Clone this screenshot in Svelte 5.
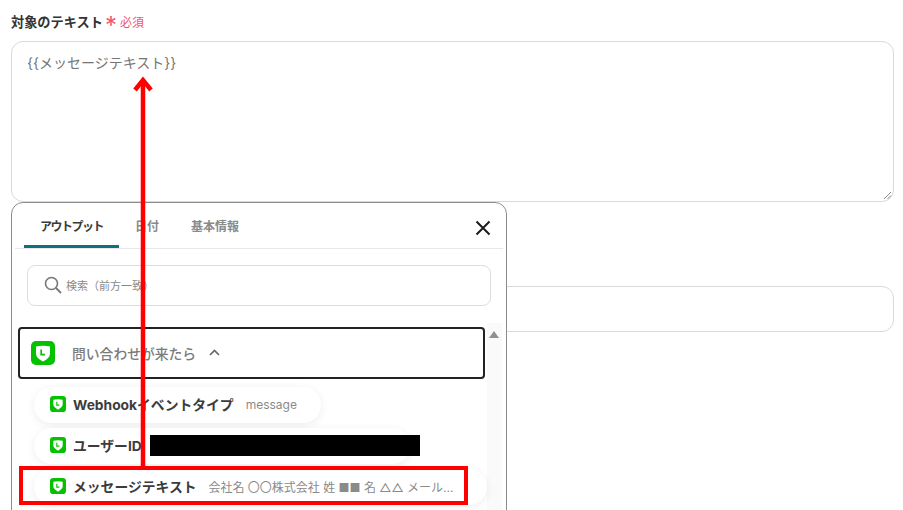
<script>
  let tabs = [
    { label: 'アウトプット', active: true },
    { label: '日付', active: false },
    { label: '基本情報', active: false }
  ];
</script>

{#snippet lineIcon(size)}
  <svg class="line-icon" width={size} height={size} viewBox="0 0 24 24">
    <rect width="24" height="24" rx="5" fill="#06c100" />
    <path d="M5 5.5 Q12 4 19 5.5 V12.5 Q19 17 12 20.5 Q5 17 5 12.5 Z" fill="#fff" />
    <path d="M10.2 8.5 V13.6 H14" fill="none" stroke="#06c100" stroke-width="1.7" />
  </svg>
{/snippet}

<div class="page">
  <div class="label">
    <span>対象のテキスト</span><span class="star">*</span><span class="req">必須</span>
  </div>
  <div class="textarea">
    {'{{'}メッセージテキスト{'}}'}
    <svg class="grip" width="9" height="9" viewBox="0 0 9 9">
      <path d="M1 8 L8 1 M4.5 8 L8 4.5" stroke="#8a8a8a" stroke-width="1" />
    </svg>
  </div>
  <div class="field"></div>

  <div class="popup">
    <div class="tabs">
      {#each tabs as tab}
        <div class="tab" class:active={tab.active}>{tab.label}</div>
      {/each}
      <svg class="close" width="16" height="16" viewBox="0 0 16 16">
        <path d="M1.5 1.5 L14.5 14.5 M14.5 1.5 L1.5 14.5" stroke="#1c1c1c" stroke-width="2" />
      </svg>
    </div>
    <div class="search">
      <svg width="18" height="18" viewBox="0 0 18 18">
        <circle cx="7.5" cy="7.5" r="6" fill="none" stroke="#777" stroke-width="1.6" />
        <path d="M12 12 L17 17" stroke="#777" stroke-width="1.8" />
      </svg>
      <span>検索（前方一致）</span>
    </div>
    <div class="list">
      <div class="rows">
        <div class="group">
          {@render lineIcon(24)}
          <span class="group-name">問い合わせが来たら</span>
          <svg width="11" height="7" viewBox="0 0 11 7">
            <path d="M1 6 L5.5 1.5 L10 6" fill="none" stroke="#666" stroke-width="1.7" />
          </svg>
        </div>
        <div class="pill">
          {@render lineIcon(16)}
          <span class="name">Webhookイベントタイプ</span>
          <span class="value">message</span>
        </div>
        <div class="pill user">
          {@render lineIcon(16)}
          <span class="name">ユーザーID</span>
          <span class="mask"></span>
        </div>
        <div class="pill wide">
          {@render lineIcon(16)}
          <span class="name">メッセージテキスト</span>
          <span class="value">会社名 〇〇株式会社 姓 ■■ 名 △△ メール...</span>
        </div>
      </div>
      <div class="scrollbar"><span class="up"></span></div>
    </div>
  </div>

  <!-- annotations on top of the screenshot -->
  <div class="red-box"></div>
  <svg class="arrow" width="24" height="392" viewBox="0 0 24 392">
    <path d="M12 392 V7" stroke="#f00" stroke-width="4.5" fill="none" />
    <path d="M4 16 L12 6 L20 16" stroke="#f00" stroke-width="4.5" fill="none" />
  </svg>
</div>

<style>
  :global(body) {
    margin: 0;
    background: #fff;
  }

  .page {
    position: relative;
    width: 903px;
    height: 510px;
    overflow: hidden;
    padding: 12px 9px 0 11px;
    box-sizing: border-box;
    font-family: Inter, "Noto Sans CJK JP", sans-serif;
  }

  .label {
    display: flex;
    align-items: center;
    height: 19px;
    font-size: 13.2px;
    font-weight: 700;
    color: #333;
    margin-bottom: 10px;
  }

  .star {
    color: #f4566c;
    font-size: 24px;
    font-weight: 400;
    margin-left: 2px;
    line-height: 19px;
    padding-top: 8px;
  }

  .req {
    color: #f4566c;
    font-size: 12px;
    font-weight: 400;
    margin-left: 3px;
  }

  .textarea {
    position: relative;
    height: 161px;
    box-sizing: border-box;
    border: 1px solid #d9d9dd;
    border-radius: 12px;
    padding: 11px 15px;
    font-size: 14px;
    line-height: 20px;
    color: #757575;
  }

  .grip {
    position: absolute;
    right: 1px;
    bottom: 1px;
  }

  .field {
    height: 46px;
    margin-top: 84px;
    box-sizing: border-box;
    border: 1px solid #d9d9dd;
    border-radius: 12px;
  }

  .popup {
    position: absolute;
    left: 11px;
    top: 202px;
    width: 496px;
    height: 340px;
    box-sizing: border-box;
    background: #fff;
    border: 1px solid #8c8c8c;
    border-radius: 12px;
    padding: 0 3px 0 3px;
  }

  .tabs {
    position: relative;
    display: flex;
    height: 45px;
    border-bottom: 1px solid #e8e8e8;
    padding-left: 9px;
  }

  .tab {
    box-sizing: border-box;
    height: 45px;
    padding-top: 16px;
    font-size: 12px;
    line-height: 16px;
    font-weight: 700;
    color: #8a8a8a;
    margin-right: 32px;
  }

  .tab.active {
    width: 95px;
    margin-right: 16px;
    padding-left: 16px;
    color: #3a3a3a;
    letter-spacing: -1.5px;
    border-bottom: 3px solid #136f80;
    border-radius: 3px 3px 0 0;
  }

  .close {
    position: absolute;
    right: 12px;
    top: 17px;
  }

  .search {
    display: flex;
    align-items: center;
    gap: 4px;
    height: 41px;
    box-sizing: border-box;
    margin: 16px 12px 0 12px;
    padding: 0 0 1px 16px;
    border: 1px solid #ddd;
    border-radius: 8px;
    font-size: 11px;
    color: #8a8a8a;
  }

  .list {
    display: flex;
    margin-top: 21px;
    padding-left: 3px;
  }

  .rows {
    width: 467px;
    flex: none;
  }

  .group {
    display: flex;
    align-items: center;
    box-sizing: border-box;
    height: 52px;
    padding: 0 0 1px 11px;
    border: 2px solid #222;
    border-radius: 4px;
    font-size: 13.8px;
    font-weight: 500;
    color: #7b7b7b;
    margin-bottom: 8px;
  }

  .group-name {
    margin-left: 17px;
    margin-right: 13px;
  }

  .pill {
    position: relative;
    display: flex;
    align-items: center;
    box-sizing: border-box;
    width: 287px;
    height: 36px;
    margin: 0 0 5px 16px;
    padding: 0 0 2px 16px;
    border-radius: 18px;
    background: #fff;
    box-shadow: 0 2px 10px rgba(0, 0, 0, 0.07);
  }

  .pill.user {
    width: 376px;
  }

  .pill.wide {
    width: 453px;
  }

  .name {
    margin-left: 7px;
    font-size: 13.8px;
    font-weight: 700;
    color: #3c3c3c;
    white-space: nowrap;
  }

  .value {
    margin-left: 12px;
    font-size: 12px;
    color: #8a8a8a;
    white-space: nowrap;
  }

  .mask {
    position: absolute;
    left: 116px;
    top: 7px;
    width: 270px;
    height: 21px;
    background: #000;
  }

  .scrollbar {
    width: 15px;
    margin: -4px 0 0 2px;
    background: #fafafa;
    height: 187px;
  }

  .up {
    display: block;
    width: 0;
    height: 0;
    margin: 8px 0 0 2px;
    border-left: 5px solid transparent;
    border-right: 5px solid transparent;
    border-bottom: 7px solid #8f8f8f;
  }

  .red-box {
    position: absolute;
    left: 19px;
    top: 466px;
    width: 449px;
    height: 39px;
    box-sizing: border-box;
    border: 4px solid #f00;
  }

  .arrow {
    position: absolute;
    left: 131px;
    top: 74px;
  }
</style>
